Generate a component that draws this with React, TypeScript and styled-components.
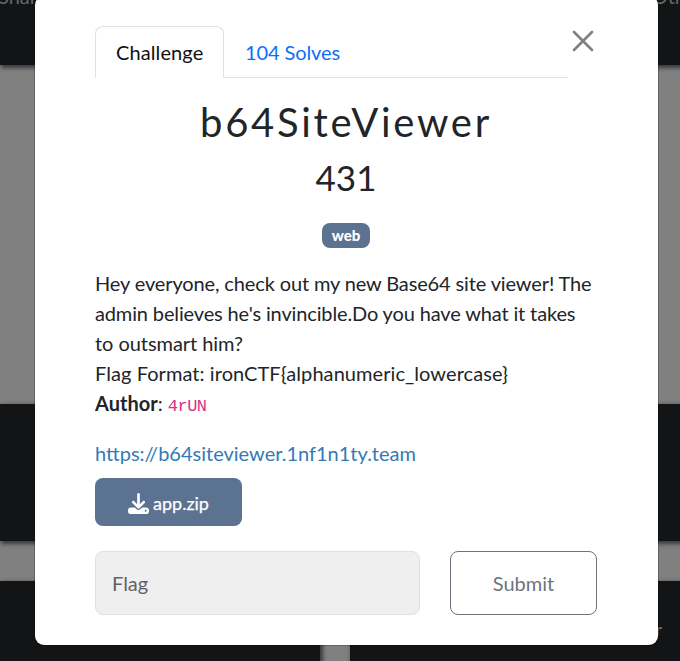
import React from "react";
import styled, { createGlobalStyle } from "styled-components";

const GlobalStyle = createGlobalStyle`
  *, *::before, *::after { box-sizing: border-box; }
  body {
    margin: 0;
    overflow: hidden;
    font-family: Lato, sans-serif;
    font-size: 20px;
    line-height: 30px;
    color: #212529;
    background: #808080;
  }
`;

const Screen = styled.div`
  position: relative;
  width: 680px;
  height: 661px;
  overflow: hidden;
  background: #808080;
`;

const Board = styled.div`
  display: grid;
  grid-template-columns: 320px 330px;
  grid-template-rows: 65px 339px 137px 40px 80px;
  column-gap: 30px;
`;

const Tile = styled.div<{ $row: number; $wide?: boolean }>`
  grid-row: ${(p) => p.$row};
  grid-column: ${(p) => (p.$wide ? "1 / -1" : "auto")};
  display: flex;
  justify-content: space-between;
  background: #121416;
  color: #77797b;
  box-shadow: 2px 2px 4px 1px #373a40;
  white-space: nowrap;
`;

const TopLabel = styled.span`
  height: 30px;
  margin: -19px -6px 0 -2px;
  color: #66686a;
`;

const CornerLabel = styled.span`
  height: 30px;
  margin: 33px 18px 0 auto;
  font-size: 18px;
`;

const Dialog = styled.section`
  position: absolute;
  left: 35px;
  top: -4px;
  width: 623px;
  height: 649px;
  padding: 30px 61px 30px 60px;
  border-radius: 9px;
  background: #fff;
  box-shadow: 0 0 0 1px rgba(0, 0, 0, 0.22);
`;

const Header = styled.header`
  display: flex;
  justify-content: space-between;
  height: 52px;
`;

const Tabs = styled.nav`
  display: flex;
  width: 473px;
  border-bottom: 1px solid #dee2e6;
`;

const Tab = styled.a<{ $active?: boolean }>`
  width: ${(p) => (p.$active ? "129px" : "auto")};
  height: 52px;
  padding: 10px 20px 0;
  border: 1px solid ${(p) => (p.$active ? "#dee2e6" : "transparent")};
  border-bottom: 0;
  border-radius: 8px 8px 0 0;
  background: ${(p) => (p.$active ? "#fff" : "transparent")};
  color: ${(p) => (p.$active ? "#111" : "#0d6efd")};
  letter-spacing: ${(p) => (p.$active ? "0.1px" : "-0.1px")};
`;

const CloseButton = styled.button`
  width: 22px;
  height: 22px;
  margin: 4px 3px 0 0;
  padding: 0;
  border: 0;
  background: none;
  svg { display: block; }
`;

const Title = styled.h2`
  margin: 20px 0 0;
  text-align: center;
  font-size: 40px;
  font-weight: 400;
  line-height: 48px;
  letter-spacing: 2.7px;
`;

const Score = styled.h3`
  margin: 10px 0 0;
  text-align: center;
  font-size: 35px;
  font-weight: 400;
  line-height: 42px;
`;

const BadgeRow = styled.div`
  display: flex;
  justify-content: center;
  margin-top: 25px;
`;

const Badge = styled.span`
  width: 48px;
  height: 25px;
  border-radius: 8px;
  background: #5b7290;
  color: #fff;
  text-align: center;
  font-size: 15px;
  font-weight: 900;
  line-height: 25px;
`;

const Description = styled.div`
  height: 150px;
  margin-top: 20px;
  white-space: nowrap;
`;

const Line = styled.div<{ $tracking?: number }>`
  height: 30px;
  letter-spacing: ${(p) => p.$tracking ?? 0}px;
`;

const Code = styled.code`
  color: #d63384;
  font-family: "Liberation Mono", monospace;
  font-size: 17px;
  line-height: 1;
  letter-spacing: -0.5px;
`;

const SiteLink = styled.a`
  display: block;
  margin-top: 20px;
  color: #337ab7;
`;

const Download = styled.a`
  display: flex;
  align-items: center;
  justify-content: center;
  gap: 4px;
  width: 147px;
  height: 48px;
  margin-top: 10px;
  padding-top: 2px;
  border-radius: 8px;
  background: #5b7290;
  color: #fff;
  font-size: 18px;
  -webkit-text-stroke: 0.25px #fff;
`;

const Form = styled.form`
  display: flex;
  gap: 30px;
  margin-top: 25px;
`;

const FlagInput = styled.input`
  width: 325px;
  height: 64px;
  padding: 0 16px;
  border: 1px solid #dee2e6;
  border-radius: 8px;
  background: #efefef;
  font: inherit;
  &::placeholder { color: #606365; opacity: 1; }
`;

const Submit = styled.button`
  width: 147px;
  height: 64px;
  padding: 0;
  border: 1px solid #6c757d;
  border-radius: 8px;
  background: #fff;
  color: #6c757d;
  font: inherit;
`;

export default function App() {
  return (
    <Screen>
      <GlobalStyle />
      <Board>
        <Tile $row={1} $wide>
          <TopLabel>Shar</TopLabel>
          <TopLabel>Oth</TopLabel>
        </Tile>
        <Tile $row={3} $wide />
        <Tile $row={5} />
        <Tile $row={5}>
          <CornerLabel>r</CornerLabel>
        </Tile>
      </Board>
      <Dialog>
        <Header>
          <Tabs>
            <Tab $active>Challenge</Tab>
            <Tab>104 Solves</Tab>
          </Tabs>
          <CloseButton aria-label="Close" type="button">
            <svg width="22" height="22" viewBox="0 0 22 22" fill="none" stroke="#808080" strokeWidth="2.6" strokeLinecap="round">
              <path d="M2 2 20 20M20 2 2 20" />
            </svg>
          </CloseButton>
        </Header>
        <Title>b64SiteViewer</Title>
        <Score>431</Score>
        <BadgeRow><Badge>web</Badge></BadgeRow>
        <Description>
          <Line $tracking={-0.13}>Hey everyone, check out my new Base64 site viewer! The</Line>
          <Line $tracking={-0.14}>admin believes he's invincible.Do you have what it takes</Line>
          <Line $tracking={-0.05}>to outsmart him?</Line>
          <Line $tracking={0.07}>Flag Format: ironCTF&#123;alphanumeric_lowercase&#125;</Line>
          <Line><strong>Author</strong>: <Code>4rUN</Code></Line>
        </Description>
        <SiteLink>https://b64siteviewer.1nf1n1ty.team</SiteLink>
        <Download>
          <svg width="21" height="21" viewBox="0 0 512 512" fill="#fff">
            <path d="M288 32c0-17.700-14.300-32-32-32s-32 14.300-32 32v242.700l-73.400-73.400c-12.500-12.500-32.800-12.500-45.300 0s-12.500 32.800 0 45.300l128 128c12.500 12.500 32.800 12.500 45.300 0l128-128c12.500-12.500 12.500-32.800 0-45.300s-32.800-12.500-45.300 0L288 274.700V32zM64 352c-35.300 0-64 28.700-64 64v32c0 35.300 28.700 64 64 64h384c35.300 0 64-28.700 64-64v-32c0-35.300-28.700-64-64-64H346.500l-45.300 45.300c-25 25-65.500 25-90.500 0L165.500 352H64zm368 56a24 24 0 1 1 0 48 24 24 0 1 1 0-48z" />
          </svg>
          app.zip
        </Download>
        <Form>
          <FlagInput placeholder="Flag" />
          <Submit type="button">Submit</Submit>
        </Form>
      </Dialog>
    </Screen>
  );
}
